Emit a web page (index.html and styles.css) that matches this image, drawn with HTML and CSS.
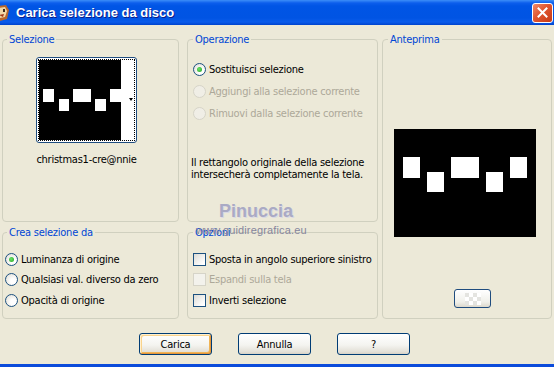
FILE: index.html
```html
<!DOCTYPE html>
<html>
    <head>
        <meta charset="utf-8">
        <title>Carica selezione da disco</title>
        <link rel="stylesheet" href="styles.css">
    </head>
    <body>
        <div class="window">
            <div class="titlebar">
                <svg class="app-icon" width="16" height="18" viewBox="0 0 16 18">
                    <path d="M3 2 L12 1 L15 6 L13 15 L6 17 L1 12 Z" fill="#b8682c"/>
                    <path d="M4 4 L11 3 L13 7 L11 13 L6 14 L3 10 Z" fill="#f1d8a6"/>
                    <rect x="9" y="5" width="2" height="3" fill="#3a2a1a"/>
                    <path d="M5 11 L10 10 L9 13 Z" fill="#a33a1a"/>
                </svg>
                <span class="title">Carica selezione da disco</span>
                <div class="close">
                    <svg width="11" height="11" viewBox="0 0 11 11">
                        <path d="M1.5 1.5 L9.5 9.5 M9.5 1.5 L1.5 9.5" stroke="#fff" stroke-width="2" stroke-linecap="square"/>
                    </svg>
                </div>
            </div>
            <div class="client">
                <div class="groups">
                    <fieldset class="group sel">
                        <legend class="first">Selezione</legend>
                        <div class="thumb-wrap">
                            <div class="thumb">
                                <div class="thumb-focus">
                                    <svg class="thumb-img" width="82" height="80" viewBox="0 0 82 80">
                                        <rect width="82" height="80" fill="#000"/>
                                        <rect x="4" y="29" width="11" height="13" fill="#fff"/>
                                        <rect x="20" y="39" width="10" height="12" fill="#fff"/>
                                        <rect x="34" y="29" width="18" height="13" fill="#fff"/>
                                        <rect x="56" y="39" width="11" height="12" fill="#fff"/>
                                        <rect x="71" y="29" width="11" height="13" fill="#fff"/>
                                    </svg>
                                    <span class="thumb-arrow"></span>
                                </div>
                            </div>
                            <p class="caption">christmas1-cre@nnie</p>
                        </div>
                    </fieldset>

                    <fieldset class="group op">
                        <legend>Operazione</legend>
                        <div class="opts-list wide">
                            <div class="opt"><span class="radio on"></span>Sostituisci selezione</div>
                            <div class="opt off"><span class="radio dis"></span>Aggiungi alla selezione corrente</div>
                            <div class="opt off"><span class="radio dis"></span>Rimuovi dalla selezione corrente</div>
                        </div>
                        <p class="desc">Il rettangolo originale della selezione intersecherà completamente la tela.</p>
                    </fieldset>

                    <fieldset class="group preview">
                        <legend>Anteprima</legend>
                        <svg class="preview-img" width="142" height="108" viewBox="0 0 142 108">
                            <rect width="142" height="108" fill="#000"/>
                            <rect x="9" y="28" width="17" height="21" fill="#fff"/>
                            <rect x="33" y="43" width="17" height="20" fill="#fff"/>
                            <rect x="57" y="28" width="28" height="21" fill="#fff"/>
                            <rect x="92" y="43" width="17" height="20" fill="#fff"/>
                            <rect x="116" y="28" width="17" height="21" fill="#fff"/>
                        </svg>
                        <div class="mini-btn"><span class="checker"></span></div>
                    </fieldset>

                    <fieldset class="group crea">
                        <legend class="first">Crea selezione da</legend>
                        <div class="opts-list">
                            <div class="opt"><span class="radio on"></span>Luminanza di origine</div>
                            <div class="opt"><span class="radio"></span>Qualsiasi val. diverso da zero</div>
                            <div class="opt"><span class="radio"></span>Opacità di origine</div>
                        </div>
                    </fieldset>

                    <fieldset class="group opzioni">
                        <legend>Opzioni</legend>
                        <div class="opts-list">
                            <div class="opt"><span class="check"></span>Sposta in angolo superiore sinistro</div>
                            <div class="opt off"><span class="check dis"></span>Espandi sulla tela</div>
                            <div class="opt"><span class="check"></span>Inverti selezione</div>
                        </div>
                    </fieldset>
                </div>
                <div class="buttons">
                    <div class="btn default">Carica</div>
                    <div class="btn">Annulla</div>
                    <div class="btn">?</div>
                </div>
            </div>
            <div class="watermark">
                <span class="wm-name">Pinuccia</span>
                <span class="wm-url">www.guidiregrafica.eu</span>
            </div>
        </div>
    </body>
</html>
```

FILE: styles.css
```css
*{
    margin: 0;
    padding: 0;
}
body{
    font-family: "DejaVu Sans Condensed", "DejaVu Sans", sans-serif;
    font-stretch: condensed;
    font-size: 11px;
    line-height: 13px;
    letter-spacing: -0.25px;
    color: #000;
}
.window{
    position: relative;
    width: 554px;
    height: 367px;
    box-sizing: border-box;
    background: #ECE9D8;
    border-bottom: 3px solid #0B4BDB;
    display: flex;
    flex-direction: column;
    overflow: hidden;
}
.titlebar{
    height: 25px;
    flex: none;
    display: flex;
    align-items: center;
    background: linear-gradient(#3C8EF8 0px, #0C5EEC 3px, #0055E5 6px, #0054E3 18px, #0A5CEB 22px, #0043CD 25px);
}
.app-icon{
    margin-left: -6px;
    margin-right: 6px;
    flex: none;
}
.title{
    flex: 1;
    font-family: "Liberation Sans", Arial, sans-serif;
    font-weight: bold;
    font-size: 13px;
    letter-spacing: 0;
    color: #fff;
    text-shadow: 1px 1px 0 #0A1C8A;
}
.close{
    width: 21px;
    height: 20px;
    margin-right: 1px;
    box-sizing: border-box;
    border: 1px solid #fff;
    border-radius: 3px;
    background: linear-gradient(135deg, #F08A6A, #E0552F 45%, #C63A15);
    display: flex;
    align-items: center;
    justify-content: center;
}
.client{
    flex: 1;
    padding: 8px 0 0 2px;
}
.groups{
    display: grid;
    grid-template-columns: 177px 191px 166px;
    grid-template-rows: 189px 93px;
    column-gap: 8px;
    row-gap: 4px;
}
.group{
    border: 1px solid #D0D0BF;
    border-radius: 4px;
    min-width: 0;
    margin: 0;
    padding: 0;
}
.group legend{
    margin-left: 5px;
    padding: 0 2px;
    color: #0046D5;
    line-height: 13px;
}
.group legend.first{
    margin-left: 4px;
}
.preview{
    grid-column: 3;
    grid-row: 1 / span 2;
    margin-left: -4px;
}
.sel{ grid-column: 1; grid-row: 1; }
.op{ grid-column: 2; grid-row: 1; }
.crea{ grid-column: 1; grid-row: 2; }
.opzioni{ grid-column: 2; grid-row: 2; }

/* selezione */
.thumb-wrap{
    width: 101px;
    margin: 11px 0 0 33px;
    display: flex;
    flex-direction: column;
    align-items: center;
}
.thumb{
    width: 101px;
    height: 86px;
    box-sizing: border-box;
    border: 1px solid #1F4C7E;
    border-radius: 3px;
    padding: 1px;
    background: #fff;
}
.thumb-focus{
    height: 100%;
    box-sizing: border-box;
    border: 1px dotted #000;
    display: flex;
    align-items: center;
}
.thumb-img{
    display: block;
    flex: none;
}
.thumb-arrow{
    margin-left: 8px;
    margin-top: -2px;
    width: 0;
    height: 0;
    border-left: 2.5px solid transparent;
    border-right: 2.5px solid transparent;
    border-top: 3px solid #000;
}
.caption{
    margin-top: 10px;
    white-space: nowrap;
}

/* radio / check lists */
.opts-list{
    margin-top: 10px;
    padding-left: 2px;
}
.opts-list.wide{
    margin-top: 12px;
    padding-left: 5px;
}
.opt{
    display: flex;
    align-items: center;
    gap: 3px;
    height: 20.5px;
    white-space: nowrap;
}
.wide .opt{
    height: 22px;
}
.opt.off{
    color: #ACA899;
}
.radio{
    width: 13px;
    height: 13px;
    flex: none;
    box-sizing: border-box;
    border: 1px solid #1C5180;
    border-radius: 50%;
    background: radial-gradient(circle at 65% 65%, #fff 25%, #DEDCD3 95%);
    display: flex;
    align-items: center;
    justify-content: center;
}
.radio.on::after{
    content: '';
    width: 5px;
    height: 5px;
    border-radius: 50%;
    background: radial-gradient(circle at 40% 40%, #6BE567, #21A121);
}
.radio.dis{
    border-color: #D6D4C8;
    background: #F0EEE6;
}
.check{
    width: 13px;
    height: 13px;
    flex: none;
    box-sizing: border-box;
    border: 1px solid #1C5180;
    background: linear-gradient(135deg, #DCDBD5, #fff 85%);
}
.check.dis{
    border-color: #D6D4C8;
    background: #F3F2EC;
}
.opzioni .opts-list{
    padding-left: 5px;
}
.desc{
    margin-top: 33px;
    padding-left: 3px;
    line-height: 12px;
}

/* anteprima */
.preview-img{
    display: block;
    margin: 83px 0 0 11px;
}
.mini-btn{
    width: 37px;
    height: 19px;
    margin: 52px 0 0 71px;
    box-sizing: border-box;
    border: 1px solid #1F4C7E;
    border-radius: 3px;
    background: linear-gradient(#fff, #F0F0EA 70%, #DCD8CC);
    display: flex;
    align-items: center;
    justify-content: center;
}
.checker{
    width: 16px;
    height: 12px;
    background: conic-gradient(#fff 25%, #E4E4E0 0 50%, #fff 0 75%, #E4E4E0 0) 0 0 / 8px 8px;
}

/* bottoni */
.buttons{
    display: flex;
    gap: 26px;
    margin-top: 14px;
    padding-left: 137px;
}
.btn{
    width: 73px;
    height: 22px;
    box-sizing: border-box;
    border: 1px solid #003C74;
    border-radius: 3px;
    background: linear-gradient(#fff, #F4F4F0 55%, #E2DFD6 90%, #D6D0C5);
    display: flex;
    align-items: center;
    justify-content: center;
}
.btn.default{
    box-shadow: inset 1px 1px 0 #FFF0CF, inset -1px -1px 0 #E5973C, inset 2px 2px 0 #F9D38C, inset -2px -2px 0 #F0B456;
}

/* filigrana */
.watermark{
    position: absolute;
    left: 196px;
    top: 201px;
    display: flex;
    flex-direction: column;
    align-items: flex-start;
    pointer-events: none;
    letter-spacing: 0;
}
.wm-name{
    margin-left: 23px;
    font-family: "Liberation Sans", Arial, sans-serif;
    font-weight: bold;
    font-size: 18px;
    line-height: 20px;
    color: #AAAAC4;
    text-shadow: 1px 1px 0 #D9D9E4;
}
.wm-url{
    margin-top: 3px;
    font-family: "Liberation Sans", Arial, sans-serif;
    font-size: 11px;
    line-height: 12px;
    letter-spacing: 0.15px;
    color: #85859C;
}
```
